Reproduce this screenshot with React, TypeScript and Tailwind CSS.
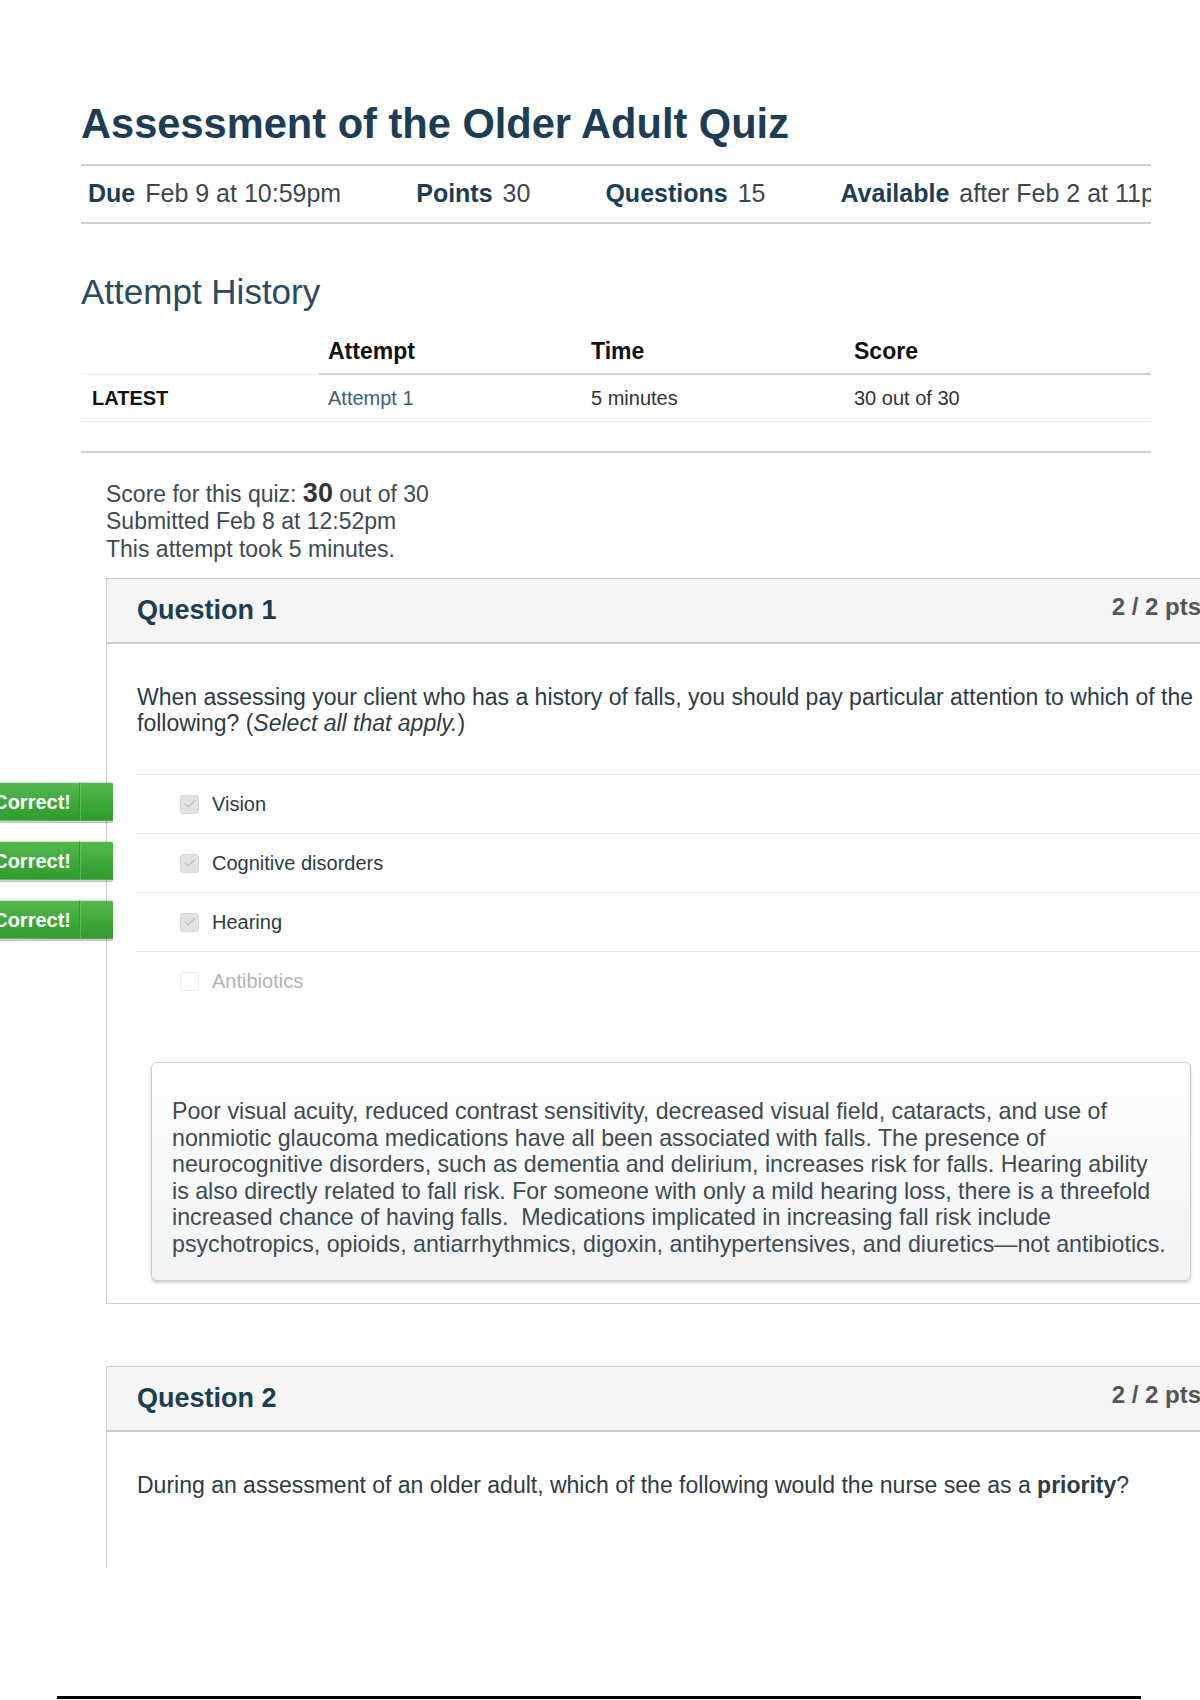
import { Check } from "lucide-react";

type Answer = { label: string; checked: boolean; correct: boolean };

const answers: Answer[] = [
  { label: "Vision", checked: true, correct: true },
  { label: "Cognitive disorders", checked: true, correct: true },
  { label: "Hearing", checked: true, correct: true },
  { label: "Antibiotics", checked: false, correct: false },
];

const feedbackLines = [
  "Poor visual acuity, reduced contrast sensitivity, decreased visual field, cataracts, and use of",
  "nonmiotic glaucoma medications have all been associated with falls. The presence of",
  "neurocognitive disorders, such as dementia and delirium, increases risk for falls. Hearing ability",
  "is also directly related to fall risk. For someone with only a mild hearing loss, there is a threefold",
  "increased chance of having falls.\u00a0 Medications implicated in increasing fall risk include",
  "psychotropics, opioids, antiarrhythmics, digoxin, antihypertensives, and diuretics\u2014not antibiotics.",
];

const MetaItem = ({ label, value }: { label: string; value: string }) => (
  <div className="flex items-baseline">
    <span className="font-bold text-[#1c3d53]">{label}</span>
    <span className="ml-[10px] text-[#3a4750]">{value}</span>
  </div>
);

const CorrectTag = () => (
  <div className="absolute left-[-137px] top-1/2 -translate-y-[calc(50%+2px)] h-[39px] w-[113px] flex rounded-r-[2px] bg-gradient-to-b from-[#52b94d] to-[#2f9b2c] border-b border-[#27772a] shadow-[0_1px_1px_rgba(0,0,0,0.25)]">
    <div className="w-[80px] flex items-center justify-end pr-[8px] border-r border-[#3c9638]">
      <span className="whitespace-nowrap text-[20px] font-bold text-white leading-none">Correct!</span>
    </div>
    <div className="flex-1 border-l border-[#6cc766]/60" />
  </div>
);

const QuestionHeader = ({ title }: { title: string }) => (
  <div className="h-[65px] flex items-center justify-between pl-[30px] pr-[34px] bg-[#f5f5f5] border-b-2 border-[#c8cdd0]">
    <h3 className="text-[27px] font-bold text-[#1c3d53]">{title}</h3>
    <span className="mb-[8px] text-[24px] font-bold text-[#555]">2 / 2 pts</span>
  </div>
);

const AnswerRow = ({ answer }: { answer: Answer }) => (
  <div className="relative h-[59px] border-t border-[#e6e6e6] flex items-center">
    {answer.correct && <CorrectTag />}
    <span
      className={
        answer.checked
          ? "ml-[43px] w-[19px] h-[19px] rounded-[3px] bg-[#e2e2e2] border border-[#d8d8d8] flex items-center justify-center"
          : "ml-[43px] w-[19px] h-[19px] rounded-[3px] bg-white border border-[#ececec]"
      }
    >
      {answer.checked && <Check size={14} strokeWidth={2.5} className="text-[#c4c4c4]" />}
    </span>
    <span className={answer.checked ? "ml-[13px] text-[20px] text-[#2d3b45]" : "ml-[13px] text-[20px] text-[#b3b3b3]"}>
      {answer.label}
    </span>
  </div>
);

export default function App() {
  return (
    <div className="relative w-[1200px] h-[1700px] overflow-hidden bg-white font-['Liberation_Sans',Arial,sans-serif]">
      <div className="ml-[81px] w-[1070px] pt-[99px]">
        <h1 className="h-[50px] leading-[50px] text-[41.6px] font-bold text-[#1c3d53]">
          Assessment of the Older Adult Quiz
        </h1>

        <div className="mt-[15px] h-[60px] border-y-2 border-[#cdd2d5] flex items-center gap-[75px] pl-[7px] overflow-hidden whitespace-nowrap text-[25px]">
          <MetaItem label="Due" value="Feb 9 at 10:59pm" />
          <MetaItem label="Points" value="30" />
          <MetaItem label="Questions" value="15" />
          <MetaItem label="Available" value="after Feb 2 at 11pm" />
        </div>

        <h2 className="mt-[48px] h-[40px] leading-[40px] text-[35px] text-[#2b4a5e]">Attempt History</h2>

        <table className="mt-[18px] w-full border-collapse text-left">
          <thead>
            <tr className="h-[44px] text-[23px] font-bold text-[#111]">
              <th className="w-[238px] border-b border-[#eeeeee]" />
              <th className="w-[262px] pl-[9px] border-b-2 border-[#cdd2d5]">Attempt</th>
              <th className="w-[263px] pl-[10px] border-b-2 border-[#cdd2d5]">Time</th>
              <th className="pl-[10px] border-b-2 border-[#cdd2d5]">Score</th>
            </tr>
          </thead>
          <tbody>
            <tr className="h-[47px] text-[20px] border-b border-[#e6e6e6]">
              <td className="pl-[11px] font-bold text-[#111]">LATEST</td>
              <td className="pl-[9px] text-[#3b5f73]">Attempt 1</td>
              <td className="pl-[10px] text-[#333]">5 minutes</td>
              <td className="pl-[10px] text-[#333]">30 out of 30</td>
            </tr>
          </tbody>
        </table>

        <div className="mt-[29px] border-t-2 border-[#cdd2d5]" />

        <div className="mt-[27px] ml-[25px] text-[23px] leading-[27.5px] text-[#3d4a52]">
          <div>
            Score for this quiz: <span className="text-[27px] font-bold text-[#333]">30</span> out of 30
          </div>
          <div>Submitted Feb 8 at 12:52pm</div>
          <div>This attempt took 5 minutes.</div>
        </div>

        {/* question 1 */}
        <div className="mt-[15px] ml-[25px] w-[1130px] border border-[#c8cdd0]">
          <QuestionHeader title="Question 1" />
          <div className="pl-[30px] pr-[30px] pt-[40px] pb-[22px]">
            <p className="text-[23px] leading-[26px] text-[#2d3b45]">
              When assessing your client who has a history of falls, you should pay particular attention to which of
              the following? (<em>Select all that apply.</em>)
            </p>
            <div className="mt-[38px]">
              {answers.map((a) => (
                <AnswerRow key={a.label} answer={a} />
              ))}
            </div>
            <div className="mt-[52px] ml-[14px] w-[1040px] rounded-[6px] border border-[#c8cdd0] bg-gradient-to-b from-white to-[#f1f3f4] shadow-[0_2px_3px_rgba(0,0,0,0.18)] px-[20px] pt-[35px] pb-[23px]">
              <p className="text-[23.2px] leading-[26.5px] text-[#3d4a52] whitespace-nowrap">
                {feedbackLines.map((line, i) => (
                  <span key={i} className="block">
                    {line}
                  </span>
                ))}
              </p>
            </div>
          </div>
        </div>

        {/* question 2, cut off at the page edge */}
        <div className="mt-[62px] ml-[25px] w-[1130px] border border-b-0 border-[#c8cdd0]">
          <QuestionHeader title="Question 2" />
          <div className="h-[136px] pl-[30px] pt-[40px]">
            <p className="text-[23px] leading-[26px] text-[#2d3b45]">
              During an assessment of an older adult, which of the following would the nurse see as a{" "}
              <strong>priority</strong>?
            </p>
          </div>
        </div>
      </div>

      <div className="mt-[128px] ml-[57px] w-[1084px] h-[3px] bg-black" />
    </div>
  );
}
